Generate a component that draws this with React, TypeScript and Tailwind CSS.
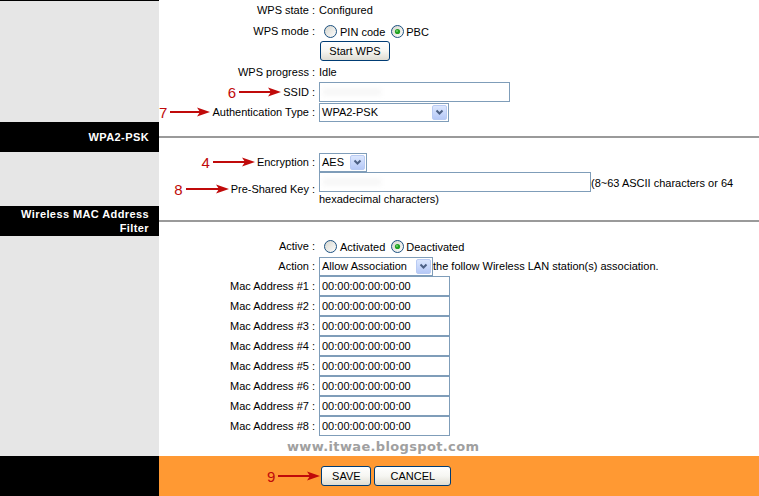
import React from "react";

const Radio = ({ checked }: { checked?: boolean }) => (
  <svg width="13" height="13" viewBox="0 0 13 13" className="shrink-0">
    <defs>
      <linearGradient id="rgrad" x1="0" y1="0" x2="1" y2="1">
        <stop offset="0" stopColor="#d4d4cc" />
        <stop offset="1" stopColor="#ffffff" />
      </linearGradient>
    </defs>
    <circle cx="6.5" cy="6.5" r="6" fill="url(#rgrad)" stroke="#1c5180" strokeWidth="1" />
    {checked && (
      <>
        <circle cx="6.5" cy="6.5" r="2.6" fill="#21a121" />
        <circle cx="6" cy="6" r="1" fill="#6fd36f" />
      </>
    )}
  </svg>
);

const Chevron = () => (
  <svg width="9" height="7" viewBox="0 0 9 7">
    <polyline points="1.5,1.5 4.5,4.5 7.5,1.5" fill="none" stroke="#4d6185" strokeWidth="2" />
  </svg>
);

const Select = ({ value, w }: { value: string; w: string }) => (
  <div className={`${w} h-[19px] border border-[#7f9db9] bg-white flex items-center shrink-0`}>
    <span className="flex-1 pl-[2px] whitespace-nowrap overflow-hidden">{value}</span>
    <div className="w-[15px] h-[15px] mr-[1px] rounded-[2px] border border-[#b9cbf3] bg-linear-to-b from-[#dce7fe] to-[#b6c9f7] flex items-center justify-center">
      <Chevron />
    </div>
  </div>
);

const Arrow = ({ w }: { w: number }) => (
  <svg width={w} height="10" viewBox={`0 0 ${w} 10`} className="shrink-0">
    <line x1="0" y1="5" x2={w - 10} y2="5" stroke="#c00a0a" strokeWidth="2" />
    <polygon points={`${w - 13},0.5 ${w},5 ${w - 13},9.5 ${w - 10},5`} fill="#c00a0a" />
  </svg>
);

const Annot = ({ n, w }: { n: string; w: number }) => (
  <span className="flex items-center mr-[2px]">
    <span className="text-[#c00a0a] text-[15px] leading-none">{n}</span>
    <span className="ml-[3px] flex">
      <Arrow w={w} />
    </span>
  </span>
);

const Row = ({
  label,
  annot,
  h,
  children,
}: {
  label: string;
  annot?: React.ReactNode;
  h: string;
  children?: React.ReactNode;
}) => (
  <div className={`flex items-center ${h}`}>
    <div className="w-[156px] shrink-0 flex justify-end items-center whitespace-nowrap">
      {annot}
      <span>{label}</span>
    </div>
    <div className="ml-[4px] flex items-center whitespace-nowrap">{children}</div>
  </div>
);

const XPButton = ({ label, w }: { label: string; w: string }) => (
  <button
    className={`${w} h-[20px] border border-[#003c74] rounded-[3px] bg-linear-to-b from-white via-[#f6f6f2] to-[#dedcd2] text-[11px] text-black leading-none`}
  >
    {label}
  </button>
);

const TextInput = ({ w, value }: { w: string; value?: string }) => (
  <div className={`${w} h-[20px] border border-[#7f9db9] bg-white flex items-center px-[2px] shrink-0`}>
    {value}
  </div>
);

const Header = ({ children, h }: { children: React.ReactNode; h: string }) => (
  <div className={`flex ${h}`}>
    <div className="w-[159px] shrink-0 bg-black text-white font-bold text-right pr-[10px] tracking-[0.4px] flex flex-col justify-center leading-[14px]">
      {children}
    </div>
    <div className="flex-1 flex items-center bg-white">
      <div className="h-[2px] w-full bg-[#9a9a9a]" />
    </div>
  </div>
);

export default function App() {
  return (
    <div
      className="w-[759px] h-[496px] overflow-hidden bg-white text-black text-[11px] leading-[13px] flex flex-col"
      style={{ fontFamily: '"Liberation Sans", Arial, sans-serif' }}
    >
      {/* Top section */}
      <div className="flex">
        <div className="w-[159px] shrink-0 bg-[#e6e6e6] border-t border-black" />
        <div className="flex-1 flex flex-col">
          <Row label="WPS state :" h="h-[21px]">
            <span>Configured</span>
          </Row>
          <Row label="WPS mode :" h="h-[20px]">
            <span className="ml-[5px] mr-[3px] flex"><Radio /></span>
            <span className="mt-[3px]">PIN code</span>
            <span className="ml-[6px] mr-[2px] flex"><Radio checked /></span>
            <span className="mt-[3px]">PBC</span>
          </Row>
          <div className="flex h-[21px] items-start">
            <div className="w-[156px] shrink-0" />
            <div className="ml-[5px]">
              <XPButton label="Start WPS" w="w-[70px]" />
            </div>
          </div>
          <Row label="WPS progress :" h="h-[20px]">
            <span>Idle</span>
          </Row>
          <Row label="SSID :" h="h-[20px]" annot={<Annot n="6" w={42} />}>
            <div className="w-[191px] h-[20px] border border-[#7f9db9] bg-white flex items-center px-[3px]">
              <span className="block w-[58px] h-[8px] bg-[#f7f7f7] blur-[2px]" />
            </div>
          </Row>
          <Row label="Authentication Type :" h="h-[20px]" annot={<Annot n="7" w={40} />}>
            <Select value="WPA2-PSK" w="w-[130px]" />
          </Row>
        </div>
      </div>

      {/* WPA2-PSK header */}
      <Header h="h-[30px]">
        <span>WPA2-PSK</span>
      </Header>

      {/* WPA2 body */}
      <div className="flex">
        <div className="w-[159px] shrink-0 bg-[#e6e6e6]" />
        <div className="flex-1 flex flex-col">
          <Row label="Encryption :" h="h-[20px]" annot={<Annot n="4" w={42} />}>
            <Select value="AES" w="w-[48px]" />
          </Row>
          <div className="flex items-center h-[34px]">
            <div className="w-[156px] shrink-0 flex justify-end items-center whitespace-nowrap">
              <Annot n="8" w={43} />
              <span>Pre-Shared Key :</span>
            </div>
            <div className="ml-[4px] flex flex-col self-start">
              <div className="flex items-center h-[20px] whitespace-nowrap">
                <div className="w-[272px] h-[20px] border border-[#7f9db9] bg-white flex items-center px-[3px]">
                  <span className="block w-[58px] h-[8px] bg-[#f7f7f7] blur-[2px]" />
                </div>
                <span className="mt-[3px]">(8~63 ASCII characters or 64</span>
              </div>
              <div className="h-[14px] leading-[14px] whitespace-nowrap">hexadecimal characters)</div>
            </div>
          </div>
        </div>
      </div>

      {/* MAC filter header */}
      <Header h="h-[30px]">
        <span>Wireless MAC Address</span>
        <span>Filter</span>
      </Header>

      {/* MAC body */}
      <div className="flex">
        <div className="w-[159px] shrink-0 bg-[#e6e6e6]" />
        <div className="flex-1 flex flex-col">
          <Row label="Active :" h="h-[20px]">
            <span className="ml-[5px] mr-[3px] flex"><Radio /></span>
            <span className="mt-[3px]">Activated</span>
            <span className="ml-[6px] mr-[2px] flex"><Radio checked /></span>
            <span className="mt-[3px]">Deactivated</span>
          </Row>
          <Row label="Action :" h="h-[20px]">
            <Select value="Allow Association" w="w-[114px]" />
            <span>the follow Wireless LAN station(s) association.</span>
          </Row>
          {[1, 2, 3, 4, 5, 6, 7, 8].map((i) => (
            <Row key={i} label={`Mac Address #${i} :`} h="h-[20px]">
              <TextInput w="w-[131px]" value="00:00:00:00:00:00" />
            </Row>
          ))}
          <div className="h-[20px] flex items-center pl-[128px]">
            <span
              className="text-[13px] font-bold text-[#a0a0a0] tracking-[0.35px] leading-none"
              style={{ fontFamily: '"DejaVu Sans", Verdana, sans-serif' }}
            >
              www.itwae.blogspot.com
            </span>
          </div>
        </div>
      </div>

      {/* Footer */}
      <div className="flex flex-1">
        <div className="w-[159px] shrink-0 bg-black" />
        <div className="flex-1 bg-[#ff9933] flex items-center pl-[108px]">
          <span className="text-[#c00a0a] text-[15px] leading-none">9</span>
          <span className="ml-[3px] flex">
            <Arrow w={42} />
          </span>
          <div className="ml-[1px] flex gap-[3px]">
            <XPButton label="SAVE" w="w-[50px]" />
            <XPButton label="CANCEL" w="w-[77px]" />
          </div>
        </div>
      </div>
    </div>
  );
}
